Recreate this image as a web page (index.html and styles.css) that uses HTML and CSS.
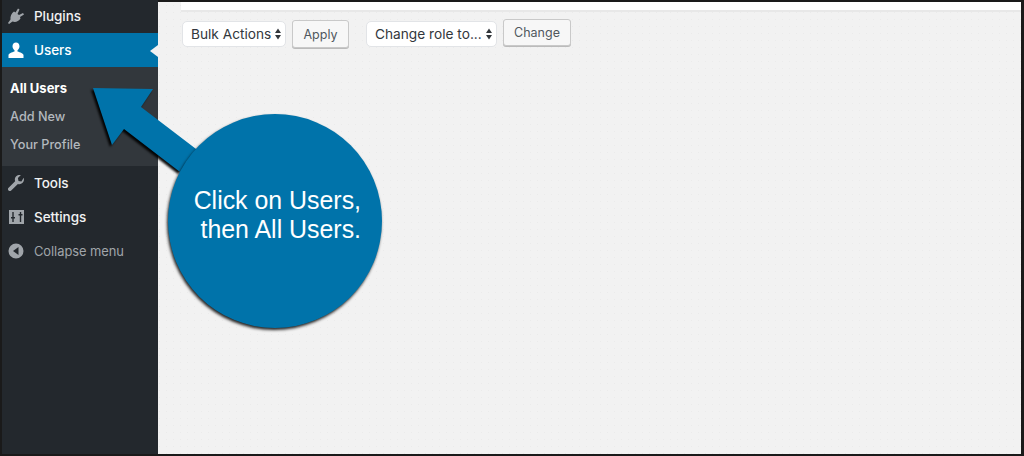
FILE: index.html
```html
<!DOCTYPE html>
<html lang="en">
<head>
<meta charset="utf-8">
<title>Users</title>
<link rel="stylesheet" href="styles.css">
</head>
<body>
<div class="frame">
  <nav class="sidebar">
    <a class="item">
      <svg class="icon" viewBox="0 0 20 20"><path d="M2 17l2.500-3.500C4 10.500 5.500 7 8 5.500l1.500 1L12 2.500l1.500 1-2 4.500 1.500 1 4-2 1 1.500-4 2.500.5 1.500c-2 3-5 4-8 3L3 18z"/></svg>
      <span>Plugins</span>
    </a>
    <a class="item current">
      <svg class="icon white" viewBox="0 0 20 20"><path d="M10 2.500c2.100 0 3.500 1.700 3.500 3.800 0 1.700-.9 3.200-2 3.900v1.200c2.600.8 6 1.800 6 3.700V18h-15v-2.900c0-1.900 3.400-2.900 6-3.700v-1.200c-1.100-.7-2-2.200-2-3.900 0-2.100 1.400-3.800 3.500-3.800z"/></svg>
      <span>Users</span>
      <i class="pointer"></i>
    </a>
    <div class="submenu">
      <a class="sub active">All Users</a>
      <a class="sub">Add New</a>
      <a class="sub">Your Profile</a>
    </div>
    <a class="item">
      <svg class="icon" viewBox="0 0 20 20"><path d="M17.700 4.800c.6 1.800.2 3.700-1.100 5-1.300 1.300-3.100 1.600-4.700 1.100l-6.700 6.500c-.8.800-2 .8-2.700 0-.8-.8-.7-2 .1-2.700l6.500-6.500c-.6-1.700-.2-3.600 1.100-4.900 1.200-1.200 3-1.700 4.700-1.200l-3 3 .6 2.900 2.900.6z"/></svg>
      <span>Tools</span>
    </a>
    <a class="item">
      <svg class="icon" viewBox="0 0 20 20"><path fill-rule="evenodd" d="M3 3h15v14H3zM6.300 5v5H5v1.500h1.300V15h1.400v-3.500H9V10H7.700V5zM13.800 5v2h-1.300v1.500h1.300V15h1.400V8.500h1.300V7h-1.300V5z"/></svg>
      <span>Settings</span>
    </a>
    <a class="item collapse">
      <svg class="icon" viewBox="0 0 20 20"><path fill-rule="evenodd" d="M10 2.500a7.500 7.500 0 1 1 0 15 7.500 7.500 0 0 1 0-15zM12.500 6L7 10l5.500 4z"/></svg>
      <span>Collapse menu</span>
    </a>
  </nav>
  <main class="content">
    <div class="topbar"></div>
    <div class="actions">
      <div class="group first">
        <div class="select">Bulk Actions<svg class="updown" viewBox="0 0 8 12"><path d="M4 .5l3 4.500H1zM4 11.500L1 7h6z"/></svg></div>
        <button class="btn apply">Apply</button>
      </div>
      <div class="group second">
        <div class="select">Change role to...<svg class="updown" viewBox="0 0 8 12"><path d="M4 .5l3 4.500H1zM4 11.500L1 7h6z"/></svg></div>
        <button class="btn change">Change</button>
      </div>
    </div>
  </main>
</div>
<svg class="arrow" viewBox="0 0 1024 456" aria-hidden="true">
  <path class="arrow-fill" d="M93 88L153 89L141 107L200 152L180 172L124 129L112 145Z"/>
</svg>
<div class="bubble"><p>Click on Users,<br>then All Users.</p></div>
</body>
</html>
```
FILE: styles.css
```css
* { box-sizing: border-box; }
html, body { margin: 0; height: 100%; }
body { width: 1024px; height: 456px; overflow: hidden; background: #111; position: relative; }
.frame {
  width: 1024px; height: 456px;
  border: solid #1a1a1a; border-width: 2px 3px 2px 2px;
  display: flex;
  background-color: #f2f2f2;
  background-image: radial-gradient(circle, #ebebeb .6px, transparent .8px);
  background-size: 7px 7px;
  font-family: Inter, "Liberation Sans", sans-serif;
}
.sidebar { width: 156px; flex: none; background: #23282d; display: flex; flex-direction: column; margin-top: -2px; }
.item {
  position: relative;
  height: 34px; flex: none;
  display: flex; align-items: center; gap: 8px;
  padding-left: 4px;
  font-size: 13.500px; font-weight: 500; letter-spacing: -.05px;
  color: #f1f2f3;
}
.item:first-child { height: 33px; padding-bottom: 1px; }
.icon { width: 20px; height: 20px; fill: #a0a5aa; flex: none; }
.icon.white { fill: #fff; }
.current { background: #0073aa; color: #fff; }
.pointer {
  position: absolute; right: 0; top: 12px;
  border: solid transparent; border-width: 6px 8px 6px 0;
  border-right-color: #f1f1f1;
}
.submenu { height: 99px; flex: none; background: #32373c; padding-top: 7px; display: flex; flex-direction: column; }
.sub { height: 28px; flex: none; display: flex; align-items: center; padding-left: 8px; font-size: 12.700px; font-weight: 500; color: #b4b9be; }
.sub.active { color: #fff; font-weight: 700; font-size: 13px; }
.collapse { color: #a0a5aa; font-weight: 400; font-size: 12.900px; }
.content { flex: 1; min-width: 0; padding-left: 23px; }
.topbar { height: 8px; background: #fff; box-shadow: 0 2px 0 #e8e8e8; }
.actions { display: flex; margin-top: 9px; padding-left: 1px; }
.group { display: flex; gap: 6px; align-items: flex-start; }
.second { margin-left: 17px; }
.select {
  height: 26px; margin-top: 2px;
  display: flex; align-items: center; justify-content: space-between;
  background: #fff; border: 1px solid #e2e4e7; border-radius: 5px;
  padding: 0 3px 0 8px;
  font-size: 13.700px; color: #32373c;
}
.first .select { width: 104px; }
.second .select { width: 131px; }
.updown { width: 8px; height: 12px; fill: #32373c; flex: none; }
.btn {
  font-family: inherit; font-size: 12.500px; color: #50575e;
  background: #f7f7f7; border: 1px solid #c9c9c9; border-radius: 3px;
  box-shadow: 0 1px 0 #bbb; padding: 0;
}
.apply { width: 57px; height: 28px; margin-top: 1px; }
.change { width: 68px; height: 27px; }
.arrow { position: absolute; left: 0; top: 0; width: 1024px; height: 456px; }
.arrow-fill { fill: #0073aa; filter: drop-shadow(-1.500px 2px 1px rgba(0,0,0,.95)); }
.bubble {
  position: absolute; left: 168px; top: 114px;
  width: 214px; height: 214px; border-radius: 50%;
  background: #0073aa;
  box-shadow: -1px 2px 3px rgba(0,0,0,.85);
  color: #fff;
  font-family: "Liberation Sans", Arial, sans-serif;
  font-size: 24.900px; line-height: 29px; text-align: right;
}
.bubble p { margin: 0; position: absolute; right: 21px; top: 72px; white-space: nowrap; }
```
